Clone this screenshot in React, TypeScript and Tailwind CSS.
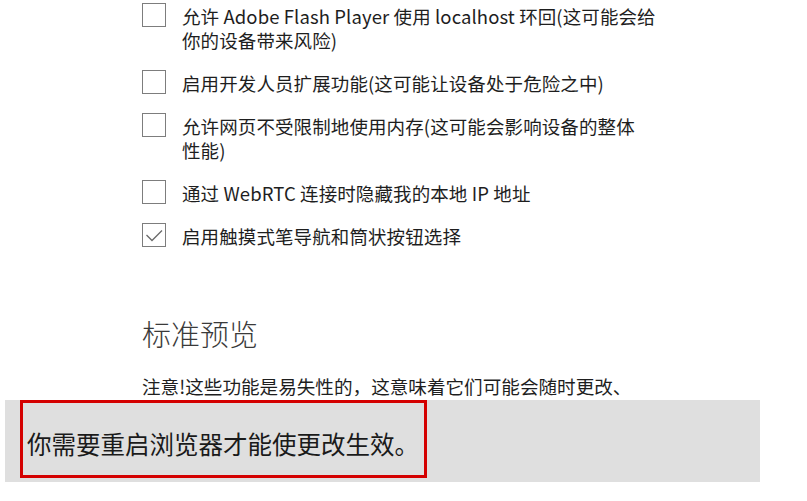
import React from "react";

const font = { fontFamily: '"Noto Sans CJK SC", "Noto Sans", "Liberation Sans", sans-serif' };

function Box({ checked }: { checked?: boolean }) {
  return (
    <div className="w-[24px] h-[24px] shrink-0 border border-[#7d7d7d] bg-white mt-[-1px]">
      {checked && (
        <svg width="22" height="22" viewBox="0 0 22 22" fill="none">
          <polyline points="3.5,11 9,16.5 19,6.5" stroke="#6a6a6a" strokeWidth="1.3" />
        </svg>
      )}
    </div>
  );
}

function Row({ lines, checked }: { lines: string[]; checked?: boolean }) {
  return (
    <div className="flex items-start gap-[16px]">
      <Box checked={checked} />
      <div className="text-[18.5px] leading-[24px] text-[#1e1e1e] whitespace-nowrap tracking-[0.1px]">
        {lines.map((l, i) => (
          <div key={i}>{l}</div>
        ))}
      </div>
    </div>
  );
}

export default function App() {
  return (
    <div className="w-[807px] h-[501px] bg-white overflow-hidden flex flex-col" style={font}>
      <div className="pl-[142px] pt-[4px]">
        <div className="flex flex-col gap-[19px]">
          <Row lines={["允许 Adobe Flash Player 使用 localhost 环回(这可能会给", "你的设备带来风险)"]} />
          <Row lines={["启用开发人员扩展功能(这可能让设备处于危险之中)"]} />
          <Row lines={["允许网页不受限制地使用内存(这可能会影响设备的整体", "性能)"]} />
          <Row lines={["通过 WebRTC 连接时隐藏我的本地 IP 地址"]} />
          <Row lines={["启用触摸式笔导航和筒状按钮选择"]} checked />
        </div>
        <div className="mt-[65px] text-[29px] leading-[40px] font-light text-[#3a3a3a]">标准预览</div>
        <div className="mt-[21px] text-[18.6px] leading-[24px] text-[#1e1e1e] whitespace-nowrap">
          注意!这些功能是易失性的，这意味着它们可能会随时更改、
        </div>
      </div>
      <div className="ml-[5px] mt-[2px] w-[755px] h-[82px] bg-[#dfdfdf] shrink-0">
        <div className="ml-[15px] w-[407px] h-[78px] border-[3px] border-[#d40000] pl-[4px] pt-[26px]">
          <div className="text-[24.5px] leading-[30px] text-[#1a1a1a] whitespace-nowrap">
            你需要重启浏览器才能使更改生效。
          </div>
        </div>
      </div>
    </div>
  );
}
